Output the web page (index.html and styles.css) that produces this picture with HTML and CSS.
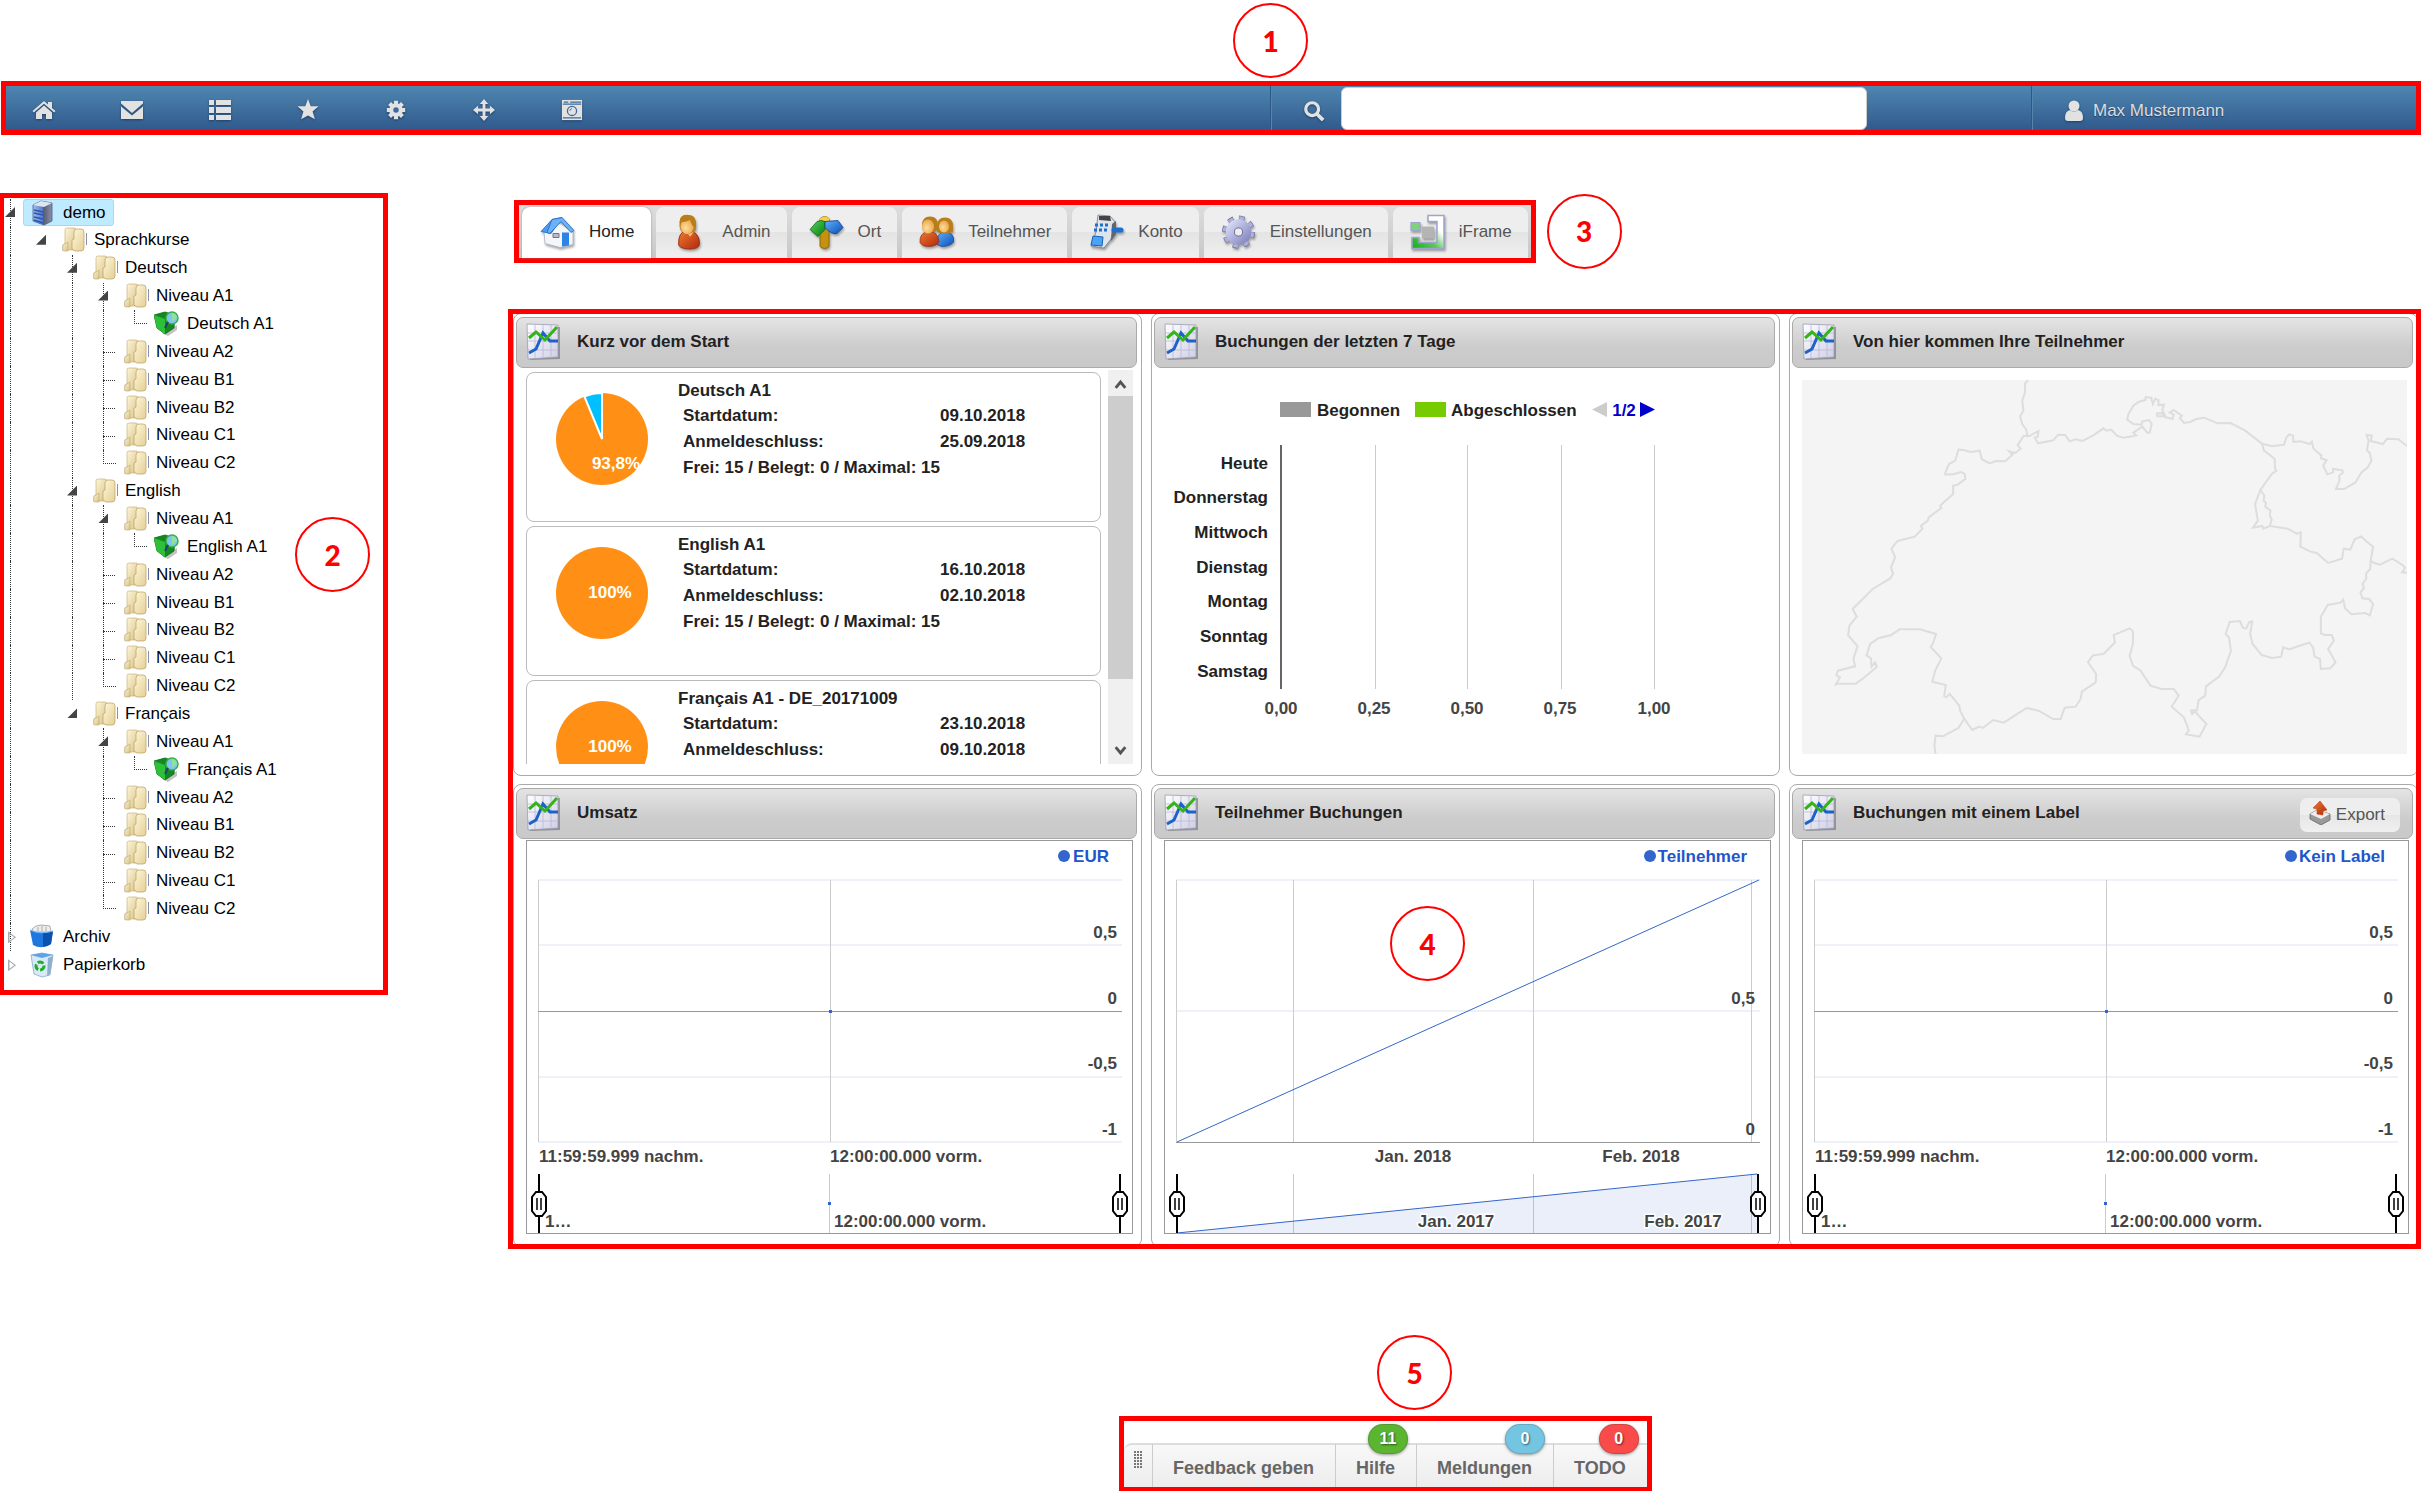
FILE: index.html
```html
<!DOCTYPE html>
<html lang="de">
<head>
<meta charset="utf-8">
<title>Dashboard</title>
<link rel="stylesheet" href="styles.css">
</head>
<body>
<svg class="defs" aria-hidden="true">
  <defs>
    <linearGradient id="gold" x1="0" y1="0" x2="1" y2="1"><stop offset="0" stop-color="#fdf6da"/><stop offset="1" stop-color="#d8c184"/></linearGradient>
    <linearGradient id="gold2" x1="0" y1="0" x2="1" y2="1"><stop offset="0" stop-color="#fff8dc"/><stop offset="1" stop-color="#e4cf95"/></linearGradient>
    <linearGradient id="server" x1="0" x2="1"><stop offset="0" stop-color="#a9bde6"/><stop offset=".5" stop-color="#5a7cc8"/><stop offset=".52" stop-color="#54586f"/><stop offset="1" stop-color="#8c8fa6"/></linearGradient>
    <linearGradient id="red" x1="0" y1="0" x2="1" y2="1"><stop offset="0" stop-color="#f07a30"/><stop offset="1" stop-color="#b0280c"/></linearGradient>
    <linearGradient id="blue" x1="0" y1="0" x2="1" y2="1"><stop offset="0" stop-color="#5fb0ff"/><stop offset="1" stop-color="#0a4fb4"/></linearGradient>
    <linearGradient id="green" x1="0" y1="0" x2="1" y2="1"><stop offset="0" stop-color="#59d65f"/><stop offset="1" stop-color="#067a12"/></linearGradient>
    <radialGradient id="skin" cx=".4" cy=".6" r=".6"><stop offset="0" stop-color="#ffdc9e"/><stop offset="1" stop-color="#e9a94c"/></radialGradient>
    <linearGradient id="paper" x1="0" y1="0" x2="1" y2="1"><stop offset="0" stop-color="#fff"/><stop offset="1" stop-color="#cfcfe6"/></linearGradient>
    <linearGradient id="lilac" x1="0" y1="0" x2="1" y2="1"><stop offset="0" stop-color="#d4d6f2"/><stop offset="1" stop-color="#8a8cc4"/></linearGradient>
    <linearGradient id="frame" x1="0" y1="1" x2="1" y2="0"><stop offset="0" stop-color="#12b012"/><stop offset=".4" stop-color="#5cc45c"/><stop offset=".7" stop-color="#fff"/></linearGradient>
  </defs>
  <symbol id="i-folder" viewBox="0 0 26 26">
    <path d="M1 18l3-2v8H1z" fill="#bbb" opacity=".5"/>
    <path d="M4 3q0-2 2-2h7q2 0 2 2v20H4z" fill="url(#gold)" stroke="#c2a866" stroke-width=".6"/>
    <path d="M2 19q0-2 2-2l3-2v9H3q-2 0-1-5z" fill="url(#gold)" stroke="#c2a866" stroke-width=".6"/>
    <path d="M13 5q0-3 3-3h4q3 0 3 3v16q0 3-3 3h-6l-3-2V13l2-1z" fill="url(#gold2)" stroke="#b99f5c" stroke-width=".7"/>
    <path d="M25.500 6v12" stroke="#8b90a8" stroke-width="1"/>
  </symbol>
  <symbol id="i-server" viewBox="0 0 24 26">
    <path d="M2 5l8-4 11 2v18l-8 4-11-4z" fill="url(#server)" stroke="#4a5a8e" stroke-width=".8"/>
    <path d="M2 5l8-4 11 2-8 4z" fill="#dfe4f2"/>
    <path d="M3 10l9 2M3 13l9 2M3 17l9 2M3 20l9 3" stroke="#2357b5" stroke-width="1.400"/>
  </symbol>
  <symbol id="i-course" viewBox="0 0 26 26">
    <path d="M8 22l6 3 9-6v-5z" fill="#999" opacity=".6"/>
    <path d="M0 4l11-3 10 3-1 13-9 6-8-6z" fill="#128a20" stroke="#0b6b14" stroke-width=".8"/>
    <path d="M0 4l11 4v15l-8-6z" fill="#2fc03a"/>
    <circle cx="18" cy="7" r="6" fill="#7fc4f4" stroke="#3aaf4a" stroke-width="1.500"/>
    <path d="M18 2a5 5 0 0 1 5 5l-5 4z" fill="#8fe29a"/>
    <path d="M14 11l-3 6" stroke="#24406e" stroke-width="2"/>
  </symbol>
  <symbol id="i-archive" viewBox="0 0 26 26">
    <path d="M2 5l4-3 5-1 9 1 1 6H4z" fill="#eee" stroke="#999" stroke-width=".8"/>
    <path d="M8 3v4M12 2v5M16 3v4" stroke="#aaa"/>
    <path d="M0 6q10 5 23 1l-2 13q-9 6-18 1z" fill="#1f78e0"/><path d="M13 9q6 0 10-2l-2 13q-4 3-8 3z" fill="#0b52b0"/>
    <path d="M0 6q10 5 23 1" fill="none" stroke="#78b8ff"/>
  </symbol>
  <symbol id="i-bin" viewBox="0 0 26 26">
    <path d="M1 3l11-2 11 2-3 20-8 2-8-3z" fill="#d9e9f7" stroke="#88a9c6" stroke-width=".8"/>
    <path d="M1 3l11-2 11 2-11 3z" fill="#5ba4e6"/>
    <circle cx="10" cy="14" r="4" fill="none" stroke="#1fae2c" stroke-width="3" stroke-dasharray="6 2"/>
    <path d="M18 6l5-2-3 18-3 2z" fill="#8fb0cc"/>
  </symbol>
  <symbol id="i-chart" viewBox="0 0 36 38">
    <path d="M2 4l32 0v32L4 37z" fill="#666" opacity=".55"/>
    <path d="M1 1l31 1v32L2 36z" fill="url(#paper)" stroke="#9a9ab8" stroke-width=".8"/>
    <path d="M9 2v33M17 2v33M25 2v33M1 10h31M1 18h31M1 27h31" stroke="#b7b7d6" stroke-width=".8"/>
    <path d="M3 30l7-4 7-16 7 8h8" fill="none" stroke="#1c62c8" stroke-width="3"/>
    <path d="M3 15l7-6 9 8L31 4" fill="none" stroke="#35b318" stroke-width="3"/>
  </symbol>
  <symbol id="i-home-c" viewBox="0 0 35 35">
    <path d="M4 17l4-4 12-4 13 9v12l-13 3-15-4z" fill="#f4f6fa" stroke="#a7b3c4" stroke-width=".8"/>
    <path d="M1 17L12 5l10-2L11 19z" fill="#4b9cf0" stroke="#1b66c4" stroke-width=".8"/>
    <path d="M12 5l10-2 12 13-3 2L21 7 10 19l-3-1z" fill="#6bb2f8" stroke="#1b66c4" stroke-width=".8"/>
    <path d="M22 18h7v13l-7 1z" fill="#2d83e6"/><path d="M13 19h6v4h-6z" fill="#b6bccb" stroke="#777"/>
  </symbol>
  <symbol id="i-person-c" viewBox="0 0 35 38">
    <path d="M5 33q-1-15 9-15 13 0 13 13 0 6-10 6-9 0-12-4z" fill="url(#red)" stroke="#8c1f0a" stroke-width=".8"/>
    <path d="M13 18l4 6 4-5z" fill="#f8c27c"/>
    <path d="M6 9Q6 1 14 1t9 8v8q-4 4-8 4-8 0-9-8z" fill="#b97d1c"/>
    <ellipse cx="14" cy="13" rx="7" ry="8" fill="url(#skin)"/>
    <path d="M6 9q8-1 11-3 1 6 6 9 2-14-8-14Q6 0 6 9z" fill="#b97d1c"/>
  </symbol>
  <symbol id="i-sign" viewBox="0 0 35 35">
    <path d="M11 4q5-4 9 0v28q-4 4-9 0z" fill="#c4920e" stroke="#7e5c08" stroke-width=".8"/>
    <path d="M11 4q5-4 9 0v4h-9z" fill="#f4d04a"/>
    <path d="M1 15L8 7q4-2 8 0v8l-7 7z" fill="url(#green)" stroke="#076b12" stroke-width=".8"/>
    <path d="M16 7l13-1 5 7-6 6q-6 1-12-6z" fill="url(#blue)" stroke="#0a3c8c" stroke-width=".8"/>
  </symbol>
  <symbol id="i-people" viewBox="0 0 35 35">
    <path d="M18 30q-1-12 8-13 9 1 9 10-4 5-12 5z" fill="url(#blue)" stroke="#0a3c8c" stroke-width=".6"/>
    <path d="M18 12q0-9 8-9t8 9v5q-8 5-16 0z" fill="#b97d1c"/><ellipse cx="25" cy="12" rx="5" ry="6" fill="url(#skin)"/>
    <path d="M1 28q-1-10 9-11 9 0 10 10-2 5-11 5-6 0-8-4z" fill="url(#red)" stroke="#8c1f0a" stroke-width=".6"/>
    <path d="M3 11q0-9 8-9t8 9q0 7-7 7-9 0-9-7z" fill="#b97d1c"/><ellipse cx="9" cy="12" rx="6" ry="7" fill="url(#skin)"/>
  </symbol>
  <symbol id="i-register" viewBox="0 0 35 36">
    <path d="M9 1l12 1 5 6-4 17-7 9L2 32l5-14z" fill="#dfe3ea" stroke="#777f8c" stroke-width=".8"/>
    <path d="M10 2h11l1 5-12-1z" fill="#444"/>
    <path d="M6 11h14M5 16h14" stroke="#1d6fd0" stroke-width="3" stroke-dasharray="3 2"/>
    <path d="M4 22l10 1-1 9-11-1z" fill="#4aa3f4" stroke="#1860b4"/>
    <path d="M23 10l4-3v13l-5 7z" fill="#666"/><path d="M25 16h7" stroke="#1d6fd0" stroke-width="5" stroke-linecap="round"/>
  </symbol>
  <symbol id="i-gear-c" viewBox="-18 -18 36 36">
    <circle r="13.500" fill="none" stroke="#6b6c98" stroke-width="7" stroke-dasharray="5.300 5.300"/>
    <circle r="13.500" fill="none" stroke="#aeb0dc" stroke-width="5.500" stroke-dasharray="4.600 6" stroke-dashoffset="-.3"/>
    <circle r="8.500" fill="none" stroke="url(#lilac)" stroke-width="9"/>
    <circle r="4.200" fill="#ededed" stroke="#6b6c98"/>
  </symbol>
  <symbol id="i-iframe" viewBox="0 0 35 35">
    <path d="M18 1h16v33H2V23h7v5h18V7h-9z" fill="url(#frame)" stroke="#9fa4cc" stroke-width="1.500"/>
    <path d="M1 8h9v8H1z" fill="#7fd07f" stroke="#9fa4cc" stroke-width="1.200"/>
    <path d="M12 12h12v12H12z" fill="#b4b4b4"/>
  </symbol>
  <symbol id="i-handle" viewBox="0 0 18 62">
    <path d="M9 1v60" stroke="#000" stroke-width="2"/>
    <path d="M6 19h6l4 5v14l-4 5H6l-4-5V24z" fill="#fff" stroke="#000" stroke-width="2"/>
    <path d="M7 25v12M11 25v12" stroke="#000" stroke-width="1.500"/>
  </symbol>
</svg>

<header class="topbar">
  <nav class="topnav" aria-label="Hauptmenü">
    <button aria-label="Startseite"><svg viewBox="0 0 24 22"><path d="M12 2l4 3.600V3h4v6l3.500 3-1.300 1.500L12 4.800 1.800 13.500.5 12z"/><path d="M12 6.500l8 7V20h-6v-5h-4v5H4v-6.500z"/></svg></button>
    <button aria-label="Nachrichten"><svg viewBox="0 0 24 22"><path d="M1 2h22v2.500L12 14 1 4.500z"/><path d="M1 7.500l11 9 11-9V20H1z"/></svg></button>
    <button aria-label="Liste"><svg viewBox="0 0 24 22"><path d="M1 1h5v5H1zM8 1h15v5H8zM1 8h5v6H1zM8 8h15v6H8zM1 16h5v5H1zM8 16h15v5H8z"/></svg></button>
    <button aria-label="Favoriten"><svg viewBox="0 0 24 24"><path d="M12 0l3 8h8.500l-6.500 5.500 2.500 8.500L12 18l-7.500 4L7 13.500.5 8H9z"/></svg></button>
    <button aria-label="Optionen"><svg viewBox="-12 -12 24 24"><g stroke="#e2e2e2" stroke-width="4.500"><path d="M0-10v20M-10 0h20M-7-7L7 7M7-7L-7 7"/></g><circle r="7.500"/><circle r="3" fill="#3d6c9c"/></svg></button>
    <button aria-label="Verschieben"><svg viewBox="-13 -13 26 26"><path d="M0-13l5 6H1.700v5.300H7V-5l6 5-6 5V1.700H1.700V7H5l-5 6-5-6h3.300V1.700H-7V5l-6-5 6-5v3.300h5.300V-7H-5z"/></svg></button>
    <button aria-label="Kamera"><svg viewBox="0 0 24 24"><path d="M1 1h22v22H1z"/><path d="M3 3.500h5M10 3.500h12M2 5.500h20M2 20.500h20" stroke="#3d6c9c" stroke-width="1.300"/><circle cx="12" cy="13" r="5" fill="none" stroke="#3d6c9c" stroke-width="1.400"/><path d="M9.500 13a3 3 0 0 1 2.500-2.500" fill="none" stroke="#3d6c9c"/></svg></button>
  </nav>
  <form class="search" role="search">
    <span class="mark mark-top">1</span>
    <label for="q" aria-label="Suche"><svg viewBox="0 0 24 24"><circle cx="10" cy="10" r="7" fill="none" stroke="#e2e2e2" stroke-width="3.500"/><path d="M15 15l7 7" stroke="#e2e2e2" stroke-width="4"/></svg></label>
    <input id="q" type="text">
  </form>
  <a class="user" href="#"><svg viewBox="0 0 20 22"><circle cx="10" cy="6" r="5.500"/><path d="M1 18q0-7 5-8 4 3 8 0 5 1 5 8 0 3-3 3H4q-3 0-3-3z"/></svg>Max Mustermann</a>
</header>

<div class="content">
  <aside class="sidebar">
    <ul class="tree" role="tree">
      <li><button class="g v open" aria-label="Zuklappen"></button><a class="active" href="#"><svg><use href="#i-server"/></svg>demo</a></li>
      <li><i class="g v"></i><button class="g open" aria-label="Zuklappen"></button><a href="#"><svg><use href="#i-folder"/></svg>Sprachkurse</a></li>
      <li><i class="g v"></i><i class="g"></i><button class="g v open" aria-label="Zuklappen"></button><a href="#"><svg><use href="#i-folder"/></svg>Deutsch</a></li>
      <li><i class="g v"></i><i class="g"></i><i class="g v"></i><button class="g v open" aria-label="Zuklappen"></button><a href="#"><svg><use href="#i-folder"/></svg>Niveau A1</a></li>
      <li><i class="g v"></i><i class="g"></i><i class="g v"></i><i class="g v"></i><i class="g e"></i><a href="#"><svg><use href="#i-course"/></svg>Deutsch A1</a></li>
      <li><i class="g v"></i><i class="g"></i><i class="g v"></i><i class="g v t"></i><a href="#"><svg><use href="#i-folder"/></svg>Niveau A2</a></li>
      <li><i class="g v"></i><i class="g"></i><i class="g v"></i><i class="g v t"></i><a href="#"><svg><use href="#i-folder"/></svg>Niveau B1</a></li>
      <li><i class="g v"></i><i class="g"></i><i class="g v"></i><i class="g v t"></i><a href="#"><svg><use href="#i-folder"/></svg>Niveau B2</a></li>
      <li><i class="g v"></i><i class="g"></i><i class="g v"></i><i class="g v t"></i><a href="#"><svg><use href="#i-folder"/></svg>Niveau C1</a></li>
      <li><i class="g v"></i><i class="g"></i><i class="g v"></i><i class="g e"></i><a href="#"><svg><use href="#i-folder"/></svg>Niveau C2</a></li>
      <li><i class="g v"></i><i class="g"></i><button class="g v open" aria-label="Zuklappen"></button><a href="#"><svg><use href="#i-folder"/></svg>English</a></li>
      <li><i class="g v"></i><i class="g"></i><i class="g v"></i><button class="g v open" aria-label="Zuklappen"></button><a href="#"><svg><use href="#i-folder"/></svg>Niveau A1</a></li>
      <li><i class="g v"></i><i class="g"></i><i class="g v"></i><i class="g v"></i><i class="g e"></i><a href="#"><svg><use href="#i-course"/></svg>English A1</a></li>
      <li><i class="g v"></i><i class="g"></i><i class="g v"></i><i class="g v t"></i><a href="#"><svg><use href="#i-folder"/></svg>Niveau A2</a></li>
      <li><i class="g v"></i><i class="g"></i><i class="g v"></i><i class="g v t"></i><a href="#"><svg><use href="#i-folder"/></svg>Niveau B1</a></li>
      <li><i class="g v"></i><i class="g"></i><i class="g v"></i><i class="g v t"></i><a href="#"><svg><use href="#i-folder"/></svg>Niveau B2</a></li>
      <li><i class="g v"></i><i class="g"></i><i class="g v"></i><i class="g v t"></i><a href="#"><svg><use href="#i-folder"/></svg>Niveau C1</a></li>
      <li><i class="g v"></i><i class="g"></i><i class="g v"></i><i class="g e"></i><a href="#"><svg><use href="#i-folder"/></svg>Niveau C2</a></li>
      <li><i class="g v"></i><i class="g"></i><button class="g open" aria-label="Zuklappen"></button><a href="#"><svg><use href="#i-folder"/></svg>Français</a></li>
      <li><i class="g v"></i><i class="g"></i><i class="g"></i><button class="g v open" aria-label="Zuklappen"></button><a href="#"><svg><use href="#i-folder"/></svg>Niveau A1</a></li>
      <li><i class="g v"></i><i class="g"></i><i class="g"></i><i class="g v"></i><i class="g e"></i><a href="#"><svg><use href="#i-course"/></svg>Français A1</a></li>
      <li><i class="g v"></i><i class="g"></i><i class="g"></i><i class="g v t"></i><a href="#"><svg><use href="#i-folder"/></svg>Niveau A2</a></li>
      <li><i class="g v"></i><i class="g"></i><i class="g"></i><i class="g v t"></i><a href="#"><svg><use href="#i-folder"/></svg>Niveau B1</a></li>
      <li><i class="g v"></i><i class="g"></i><i class="g"></i><i class="g v t"></i><a href="#"><svg><use href="#i-folder"/></svg>Niveau B2</a></li>
      <li><i class="g v"></i><i class="g"></i><i class="g"></i><i class="g v t"></i><a href="#"><svg><use href="#i-folder"/></svg>Niveau C1</a></li>
      <li><i class="g v"></i><i class="g"></i><i class="g"></i><i class="g e"></i><a href="#"><svg><use href="#i-folder"/></svg>Niveau C2</a></li>
      <li><button class="g v closed" aria-label="Aufklappen"></button><a href="#"><svg><use href="#i-archive"/></svg>Archiv</a></li>
      <li><button class="g closed" aria-label="Aufklappen"></button><a href="#"><svg><use href="#i-bin"/></svg>Papierkorb</a></li>
    </ul>
    <span class="mark mark-tree">2</span>
  </aside>

  <main>
    <div class="tabrow">
      <nav class="tabs" aria-label="Bereiche">
        <a class="tab current" href="#"><svg><use href="#i-home-c"/></svg>Home</a>
        <a class="tab" href="#"><svg><use href="#i-person-c"/></svg>Admin</a>
        <a class="tab" href="#"><svg><use href="#i-sign"/></svg>Ort</a>
        <a class="tab" href="#"><svg><use href="#i-people"/></svg>Teilnehmer</a>
        <a class="tab" href="#"><svg><use href="#i-register"/></svg>Konto</a>
        <a class="tab" href="#"><svg><use href="#i-gear-c"/></svg>Einstellungen</a>
        <a class="tab" href="#"><svg><use href="#i-iframe"/></svg>iFrame</a>
      </nav>
      <span class="mark">3</span>
    </div>

    <div class="dashboard">
      <section class="panel">
        <h2><svg><use href="#i-chart"/></svg>Kurz vor dem Start</h2>
        <div class="scroller">
          <div class="cards">
            <article class="card">
              <svg class="pie" viewBox="0 0 92 92"><circle cx="46" cy="46" r="46" fill="#ff9015"/><path d="M46 46L28.400 3.500A46 46 0 0 1 46 0z" fill="#00bfff" stroke="#fff" stroke-width="2"/><text x="60" y="76">93,8%</text></svg>
              <div><h3>Deutsch A1</h3>
              <dl><dt>Startdatum:</dt><dd>09.10.2018</dd><dt>Anmeldeschluss:</dt><dd>25.09.2018</dd></dl>
              <p>Frei: 15 / Belegt: 0 / Maximal: 15</p></div>
            </article>
            <article class="card">
              <svg class="pie" viewBox="0 0 92 92"><circle cx="46" cy="46" r="46" fill="#ff9015"/><text x="54" y="51">100%</text></svg>
              <div><h3>English A1</h3>
              <dl><dt>Startdatum:</dt><dd>16.10.2018</dd><dt>Anmeldeschluss:</dt><dd>02.10.2018</dd></dl>
              <p>Frei: 15 / Belegt: 0 / Maximal: 15</p></div>
            </article>
            <article class="card">
              <svg class="pie" viewBox="0 0 92 92"><circle cx="46" cy="46" r="46" fill="#ff9015"/><text x="54" y="51">100%</text></svg>
              <div><h3>Français A1 - DE_20171009</h3>
              <dl><dt>Startdatum:</dt><dd>23.10.2018</dd><dt>Anmeldeschluss:</dt><dd>09.10.2018</dd></dl></div>
            </article>
          </div>
          <div class="scrollbar">
            <svg viewBox="0 0 26 26"><path d="M8 18l5-6 5 6"/></svg>
            <span class="thumb"></span>
            <svg class="down" viewBox="0 0 26 26"><path d="M8 9l5 6 5-6"/></svg>
          </div>
        </div>
      </section>

      <section class="panel">
        <h2><svg><use href="#i-chart"/></svg>Buchungen der letzten 7 Tage</h2>
        <svg class="bars" viewBox="1154 369 621 394">
          <path fill="#999" d="M1280 401h31v15h-31z"/><text x="1317" y="415">Begonnen</text>
          <path fill="#76cc00" d="M1415 401h31v15h-31z"/><text x="1451" y="415">Abgeschlossen</text>
          <path fill="#ccc" d="M1607 401v15l-15-7.500z"/><text class="page" x="1624" y="415">1/2</text><path fill="#0000cc" d="M1640 401v15l15-7.500z"/>
          <path class="grid" d="M1375 444v244M1467 444v244M1561 444v244M1654 444v244"/>
          <path stroke="#666" stroke-width="2" d="M1281 444v244"/>
          <g text-anchor="end"><text x="1268" y="468">Heute</text><text x="1268" y="502">Donnerstag</text><text x="1268" y="537">Mittwoch</text><text x="1268" y="572">Dienstag</text><text x="1268" y="606">Montag</text><text x="1268" y="641">Sonntag</text><text x="1268" y="676">Samstag</text></g>
          <g class="axis" text-anchor="middle"><text x="1281" y="713">0,00</text><text x="1374" y="713">0,25</text><text x="1467" y="713">0,50</text><text x="1560" y="713">0,75</text><text x="1654" y="713">1,00</text></g>
        </svg>
      </section>

      <section class="panel">
        <h2><svg><use href="#i-chart"/></svg>Von hier kommen Ihre Teilnehmer</h2>
        <svg class="map" viewBox="55 238 1481 1122" preserveAspectRatio="none">
          <path d="M609 238L601 248 601 275 594 300 597 330 589 347 594 370 603 385 607 404"/>
          <path d="M404 522L415 490 430 480 438 447 450 448 468 454 490 450 495 475 514 488 530 481 552 482 570 463 562 452 577 457 590 444 583 433 598 405 612 406 620 400 634 391 632 408 625 411 633 428 670 419 682 402 699 403 710 422 725 416 742 421 768 404 793 383 800 390 812 387 826 405 840 411 865 407 873 404 866 396 888 378 900 396 906 396 911 370 905 358 888 362 886 372 866 370 851 357 854 340 866 315 880 303 896 298 896 289 910 291 914 310 920 294 928 299 927 313 941 312 937 328 944 346 925 347 924 338 935 337 944 349 962 355 965 342 955 336 964 328 985 345 980 352 990 367 1005 364 1020 355 1040 351 1072 368 1104 367 1140 390 1181 429 1186 450 1212 474 1213 505 1216 510 1205 520 1177 568 1164 610 1171 660 1159 681 1182 676 1184 684 1200 676"/>
          <path d="M1177 568L1187 585 1185 600 1191 607 1189 618 1202 630 1200 645 1205 657 1200 676 1244 684 1266 699 1276 695 1275 738 1300 753 1315 757 1343 787 1377 774 1381 744 1397 747 1408 716 1424 707 1436 722 1453 738 1447 780 1446 805 1436 818 1436 835 1427 850 1431 862 1422 875 1427 893 1443 895 1453 910 1445 944 1434 937 1400 941 1384 922 1380 897 1373 906 1342 913 1325 948 1325 998 1334 1003 1352 1003 1357 1020 1343 1045 1361 1085 1348 1103 1325 1105 1323 1075 1310 1068 1306 1040 1297 1026 1279 1033 1247 1046 1233 1040 1228 1068 1205 1072 1180 1063 1158 1030 1152 1000 1157 962 1150 964 1142 984 1134 981 1127 961 1102 964 1092 1000 1100 1010 1105 1050 1091 1100 1076 1128 1044 1157 1042 1185 1026 1198 1022 1228 1007 1230 1010 1240 1017 1232 1030 1250 1045 1270 1028 1308 995 1301 1002 1290 990 1250 960 1218 977 1185 965 1165 935 1165 908 1155 884 1110 865 1095 857 1066 865 1030 865 992 857 983 818 1003 821 1025 793 1060 767 1064 755 1085 775 1120 774 1145 740 1173 737 1195 725 1218 698 1221 688 1255 670 1255 634 1230 605 1222 584 1238 549 1266 523 1258 498 1282 488 1278 472 1288 452 1254 442 1230 440 1215 417 1180 408 1190 403 1186 407 1153 374 1143 381 1110 396 1073 370 1039 376 1027 383 1000 344 986 294 986 272 1004 243 1012 222 1030 213 1064 224 1073 225 1098 234 1085 238 1099 205 1133 187 1149 140 1149 136 1155 148 1130 139 1123 143 1110 180 1098 185 1097 181 1074 191 1036 168 1004 171 975 189 948 179 925 228 865 270 834 278 820 273 800 283 770 274 744 289 721 331 708 350 684 346 676 363 660 365 650 396 622 393 616 400 607 425 580 425 555 436 552 455 535 453 519 444 514 428 520 404 522"/>
          <path d="M452 1254L438 1282 400 1307 382 1305 379 1335 382 1360M1181 429L1205 437 1235 432 1241 409 1248 401 1257 405 1258 424 1275 422 1298 430 1303 423 1307 444 1327 465 1325 473 1339 478 1331 495 1341 521 1355 515 1355 505 1378 509 1379 516 1370 525 1371 539 1362 565 1382 565 1409 546 1424 516 1440 500 1449 480 1445 458 1438 448 1442 420 1437 403 1450 405 1447 421 1477 430 1487 414 1515 416 1536 436M1447 780L1456 787 1470 792 1500 774 1515 785 1527 795 1531 802 1524 815 1536 816"/>
        </svg>
      </section>

      <section class="panel">
        <h2><svg><use href="#i-chart"/></svg>Umsatz</h2>
        <svg class="timeline" viewBox="526 839 607 394">
          <circle cx="1064" cy="855" r="6"/><text class="legend" x="1109" y="861">EUR</text>
          <path class="faint" d="M538 879h584M538 944h584M538 1076h584M538 1141h584"/>
          <path class="grid" d="M538 879v262M830 879v262M829 1173v60"/>
          <path class="zero" d="M538 1010h584"/>
          <path fill="#36c" d="M829 1009h3v3h-3zM828 1201h3v3h-3z"/>
          <g class="axis"><g text-anchor="end"><text x="1117" y="937">0,5</text><text x="1117" y="1003">0</text><text x="1117" y="1068">-0,5</text><text x="1117" y="1134">-1</text></g>
          <text x="539" y="1161">11:59:59.999 nachm.</text><text x="830" y="1161">12:00:00.000 vorm.</text><text x="545" y="1226">1…</text><text x="834" y="1226">12:00:00.000 vorm.</text></g>
          <use href="#i-handle" x="530" y="1172" width="18" height="62"/><use href="#i-handle" x="1111" y="1172" width="18" height="62"/>
        </svg>
      </section>

      <section class="panel">
        <h2><svg><use href="#i-chart"/></svg>Teilnehmer Buchungen</h2>
        <svg class="timeline" viewBox="1164 839 607 394">
          <circle cx="1650" cy="855" r="6"/><text class="legend" x="1747" y="861">Teilnehmer</text>
          <path class="faint" d="M1176 879h584M1176 1010h584"/>
          <path class="grid" d="M1176 879v262M1293 879v262M1533 879v262M1751 879v262M1293 1173v60M1533 1173v60M1751 1173v60"/>
          <path class="zero" d="M1176 1141h584"/>
          <path fill="#36c" fill-opacity=".1" d="M1177 1232L1757 1173v60H1177z"/>
          <path class="series" d="M1177 1141L1759 879M1177 1232L1757 1173"/>
          <g class="axis"><g text-anchor="end"><text x="1755" y="1003">0,5</text><text x="1755" y="1134">0</text></g>
          <g class="halo" text-anchor="middle"><text x="1413" y="1161">Jan. 2018</text><text x="1641" y="1161">Feb. 2018</text><text x="1456" y="1226">Jan. 2017</text><text x="1683" y="1226">Feb. 2017</text></g></g>
          <use href="#i-handle" x="1168" y="1172" width="18" height="62"/><use href="#i-handle" x="1749" y="1172" width="18" height="62"/>
        </svg>
        <span class="mark mark-chart">4</span>
      </section>

      <section class="panel">
        <h2><svg><use href="#i-chart"/></svg>Buchungen mit einem Label
          <button class="export"><svg viewBox="0 0 22 24"><path d="M1 13l7-4 13 4v6l-9 5L1 18z" fill="#999" stroke="#666" stroke-width=".8"/><path d="M1 13l7-4 13 4-9 5z" fill="#eee"/><path d="M11 0l7 9-4 1v4l-6-1V8L4 7z" fill="url(#red)" stroke="#c33c10" stroke-width=".6"/></svg>Export</button></h2>
        <svg class="timeline" viewBox="526 839 607 394">
          <circle cx="1015" cy="855" r="6"/><text class="legend" x="1109" y="861">Kein Label</text>
          <path class="faint" d="M538 879h584M538 944h584M538 1076h584M538 1141h584"/>
          <path class="grid" d="M538 879v262M830 879v262M829 1173v60"/>
          <path class="zero" d="M538 1010h584"/>
          <path fill="#36c" d="M829 1009h3v3h-3zM828 1201h3v3h-3z"/>
          <g class="axis"><g text-anchor="end"><text x="1117" y="937">0,5</text><text x="1117" y="1003">0</text><text x="1117" y="1068">-0,5</text><text x="1117" y="1134">-1</text></g>
          <text x="539" y="1161">11:59:59.999 nachm.</text><text x="830" y="1161">12:00:00.000 vorm.</text><text x="545" y="1226">1…</text><text x="834" y="1226">12:00:00.000 vorm.</text></g>
          <use href="#i-handle" x="530" y="1172" width="18" height="62"/><use href="#i-handle" x="1111" y="1172" width="18" height="62"/>
        </svg>
      </section>
    </div>
  </main>
</div>

<footer>
  <span class="mark">5</span>
  <div class="dock">
    <span class="grip"><svg viewBox="0 0 8 18"><path d="M1 0v18M4 0v18M7 0v18" stroke="#777" stroke-width="2" stroke-dasharray="2 1"/></svg></span>
    <button>Feedback geben</button>
    <button>Hilfe<span class="badge green">11</span></button>
    <button>Meldungen<span class="badge sky">0</span></button>
    <button>TODO<span class="badge crimson">0</span></button>
  </div>
</footer>
</body>
</html>
```
FILE: styles.css
```css
* { box-sizing: border-box; }

body {
  margin: 0;
  padding-top: 81px;
  background: #fff;
  color: #222;
  font: 17px/20px "Liberation Sans", Arial, sans-serif;
}

a { color: inherit; text-decoration: none; }
button { margin: 0; padding: 0; border: 0; background: none; color: inherit; font: inherit; }
h2, h3, p, dl, dd, ul { margin: 0; padding: 0; font-size: 17px; }
ul { list-style: none; }
.defs { position: absolute; width: 0; height: 0; }

/* numbered callouts */
.mark {
  display: flex;
  flex: none;
  align-items: center;
  justify-content: center;
  width: 75px;
  height: 75px;
  border: 2px solid #f00;
  border-radius: 50%;
  background: #fff;
  color: #f00;
  font: 900 28px/32px Lato, sans-serif;
}

/* top bar */
.topbar {
  display: grid;
  grid-template-columns: 1264fr 761fr 385fr;
  height: 54px;
  margin-left: 1px;
  border: 5px solid #f00;
  background: linear-gradient(#4f86b0, #305a8c);
}
.topnav { display: flex; align-items: center; gap: 60px; padding: 4px 0 0 24px; }
.topnav button { display: flex; justify-content: center; width: 28px; }
.topbar svg { width: 24px; height: 22px; fill: #e2e2e2; filter: drop-shadow(0 1px 1px #1f3f66); }
.search, .user { border-left: 1px solid #2e5884; box-shadow: inset 1px 0 #5585ad; }
.search { position: relative; display: flex; align-items: center; padding-top: 1px; }
.search label { display: flex; justify-content: center; width: 70px; padding: 4px 0 0 16px; }
.search input { width: 526px; height: 43px; padding: 0 12px; border: 1px solid #ccc; border-radius: 6px; font: inherit; }
.mark-top { position: absolute; left: -38px; top: -83px; }
.user {
  display: flex;
  align-items: center;
  gap: 9px;
  padding: 6px 0 0 32px;
  color: #ddd;
  text-shadow: 0 1px 1px #1f3f66;
}
.topbar .user svg { width: 20px; }

/* page body */
.content { display: grid; grid-template-columns: 388px minmax(0, 1fr); gap: 120px; padding-top: 59px; }

.sidebar { position: relative; align-self: start; height: 801px; padding-top: 5px; }
.sidebar::after { content: ""; position: absolute; inset: -1px 0 0 -1px; border: 5px solid #f00; pointer-events: none; }
.mark-tree { position: absolute; left: 295px; top: 323px; }
.tree { display: flex; flex-direction: column; height: 780px; color: #000; }
.tree li { display: flex; flex: 1 1 0; min-height: 0; }
.tree a { display: flex; align-items: center; gap: 7px; height: 27px; margin-left: -8px; padding: 0 7px 0 8px; border: 1px solid transparent; border-width: 1px 0; }
.tree a.active { border: 1px solid #99defd; border-radius: 3px; background: #beebff; padding-left: 7px; }
.tree a svg { width: 26px; height: 26px; margin-left: -1px; }
.g { position: relative; flex: none; width: 31px; }
.v::before, .e::before { content: ""; position: absolute; left: 10px; top: 0; bottom: 0; border-left: 1px dotted #333; }
.e::before { bottom: 50%; width: 12px; border-bottom: 1px dotted #333; }
.t::after { content: ""; position: absolute; left: 10px; top: 50%; width: 12px; border-top: 1px dotted #333; }
.open::after, .closed::after { content: ""; position: absolute; left: 5px; top: 8px; width: 10px; height: 10px; background: #444; clip-path: polygon(100% 0, 100% 100%, 0 100%); }
.closed::after { left: 8px; height: 12px; background: #aaa; clip-path: polygon(0 0, 80% 50%, 0 100%, 0 0, 15% 20%, 15% 80%, 62% 50%, 15% 20%); }

/* tabs */
.tabrow { display: flex; align-items: center; gap: 11px; height: 74px; padding-left: 6px; }
.tabs { display: flex; gap: 5px; height: 63px; padding: 2px 3px 0 3px; border: 5px solid #f00; background: linear-gradient(#ddd, #c8c8c8); }
.tab {
  display: flex;
  align-items: center;
  gap: 14px;
  padding: 0 16px 0 17px;
  border-radius: 8px 8px 0 0;
  background: linear-gradient(#eee 50%, #e4e4e4 50%, #f0f0f0);
  color: #555;
}
.tab.current { padding: 0 17px 0 18px; background: #fff; color: #222; box-shadow: 0 0 2px #888; }
.tab svg { width: 35px; height: 36px; filter: drop-shadow(1px 2px 1px #0005); }

/* dashboard */
.dashboard {
  position: relative;
  display: grid;
  grid-template-columns: repeat(3, minmax(0, 1fr));
  grid-auto-rows: 463px;
  gap: 8px 9px;
  margin-top: 41px;
  padding: 4px 3px 2px 5px;
}
.dashboard::after { content: ""; position: absolute; inset: 0; border: 5px solid #f00; pointer-events: none; }
.panel { position: relative; padding: 3px 4px 0 2px; border: 1px solid #aaa; border-radius: 8px; }
.panel h2 {
  display: flex;
  align-items: center;
  gap: 15px;
  height: 51px;
  padding: 0 12px 2px 9px;
  border: 1px solid #aaa;
  border-radius: 7px;
  background: linear-gradient(#e4e4e4, #ccc 60%, #c9c9c9);
}
.panel h2 > svg { width: 36px; height: 38px; }
.export {
  display: flex;
  align-items: center;
  gap: 5px;
  height: 34px;
  margin: 4px 0 0 auto;
  padding: 0 15px 0 9px;
  border-radius: 7px;
  background: linear-gradient(#eee 50%, #e6e6e6 50%, #f0f0f0);
  color: #555;
  font-weight: normal;
}
.export svg { width: 22px; height: 24px; margin-top: -4px; }

.scroller { display: flex; justify-content: space-between; height: 394px; margin: 2px 4px 0 10px; overflow: hidden; }
.cards { flex: 1; display: flex; flex-direction: column; gap: 4px; padding: 2px 7px 0 0; }
.card { display: flex; flex: none; gap: 30px; height: 150px; padding: 8px 0 0 29px; border: 1px solid #bbb; border-radius: 8px; font-weight: bold; }
.pie { flex: none; width: 92px; height: 92px; margin-top: 12px; overflow: visible; font-size: 17px; fill: #fff; text-anchor: middle; }
.card dl { display: grid; grid-template-columns: 257px auto; grid-auto-rows: 26px; padding: 2px 0 0 5px; line-height: 26px; }
.card p { padding-left: 5px; line-height: 26px; }
.scrollbar { display: flex; flex-direction: column; width: 25px; background: #f0f0f0; }
.scrollbar svg { width: 25px; height: 26px; fill: none; stroke: #555; stroke-width: 3px; }
.thumb { height: 283px; background: #cdcdcd; }
.scrollbar .down { margin-top: auto; }

.bars, .map, .timeline { display: block; font-size: 17px; font-weight: bold; fill: #222; }
.bars { width: 100%; margin-top: 2px; }
.page { fill: #0000cc; text-anchor: middle; }
.grid, .faint, .zero { fill: none; stroke: #ccc; stroke-width: 1px; shape-rendering: crispEdges; }
.axis { fill: #444; }
.halo { stroke: #fff; stroke-width: 3px; paint-order: stroke; }
.map { width: calc(100% - 16px); height: 374px; margin: 12px 0 0 10px; background: #f4f4f4; }
.map path { fill: none; stroke: #ddd; stroke-width: 2px; vector-effect: non-scaling-stroke; }
.timeline { width: calc(100% - 14px); margin: 1px 0 0 10px; outline: 1px solid #999; outline-offset: -1px; }
.timeline circle { fill: #36c; }
.legend { fill: #25c; text-anchor: end; }
.faint { stroke: #f0f0f8; stroke-width: 2px; }
.zero { stroke: #999; }
.series { stroke: #36c; stroke-width: 1px; fill: none; }
.mark-chart { position: absolute; left: 238px; top: 121px; }

/* bottom dock */
footer { display: flex; flex-direction: column; align-items: flex-start; gap: 6px; margin-top: 86px; padding-left: 1119px; }
footer > .mark { margin-left: 258px; }
.dock { display: flex; height: 76px; padding-top: 22px; border: 5px solid #f00; }
.dock > * {
  position: relative;
  padding: 3px 21px 0 20px;
  border-left: 1px solid #ccc;
  border-top: 2px solid #ddd;
  background: linear-gradient(#f8f8f8, #ededed);
  color: #666;
  font: bold 18px/20px "Liberation Sans", Arial, sans-serif;
}
.dock .grip { width: 28px; padding: 6px 0 0 10px; border-left: 0; border-radius: 8px 0 0; }
.grip svg { display: block; width: 8px; height: 18px; }
.badge {
  position: absolute;
  right: 8px;
  top: -21px;
  width: 40px;
  height: 30px;
  border: 1px solid #0002;
  border-radius: 15px;
  color: #fff;
  font-size: 16px;
  line-height: 28px;
  text-shadow: 1px 1px 2px #0008;
  box-shadow: 0 1px 3px #0006;
}
.green { background: #5cb531; }
.sky { background: #74c5e2; }
.crimson { background: #fa4b4b; }
```
